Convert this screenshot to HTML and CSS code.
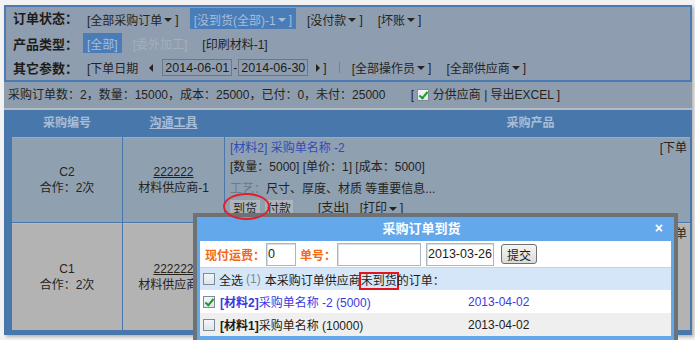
FILE: index.html
```html
<!DOCTYPE html>
<html lang="zh-CN">
  <head>
    <meta charset="UTF-8" />
    <title>采购订单</title>
    <link rel="stylesheet" href="styles.css">
  </head>
  <body>
    <div class="page">
      <div class="filter">
        <div class="frow">
          <span class="flabel">订单状态：</span>
          <a class="opt">[全部采购订单<i class="caret"></i>]</a>
          <a class="opt on">[没到货(全部)-1<i class="caret"></i>]</a>
          <a class="opt">[没付款<i class="caret"></i>]</a>
          <a class="opt">[坏账<i class="caret"></i>]</a>
        </div>
        <div class="frow">
          <span class="flabel">产品类型：</span>
          <a class="opt on">[全部]</a>
          <a class="opt off">[委外加工]</a>
          <a class="opt">[印刷材料-1]</a>
        </div>
        <div class="frow">
          <span class="flabel">其它参数：</span>
          <span class="opt">[下单日期</span>
          <i class="tri-l"></i>
          <input class="date" value="2014-06-01"><span class="dash">-</span><input class="date" value="2014-06-30">
          <i class="tri-r"></i><span>]</span>
          <span class="sep"></span>
          <a class="opt">[全部操作员<i class="caret"></i>]</a>
          <a class="opt">[全部供应商<i class="caret"></i>]</a>
        </div>
      </div>

      <div class="summary">
        <span>采购订单数：2，数量：15000，成本：25000，已付：0，未付：25000</span>
        <span class="tools">[ <i class="chk on"></i> 分供应商 | 导出EXCEL ]</span>
      </div>

      <div class="grid">
        <div class="th">采购编号</div>
        <div class="th"><u>沟通工具</u></div>
        <div class="th th-prod">采购产品</div>

        <div class="td center">
          <div>C2</div>
          <div>合作：2次</div>
        </div>
        <div class="td center">
          <div><u>222222</u></div>
          <div>材料供应商-1</div>
        </div>
        <div class="td prod">
          <span class="due">[下单</span>
          <div class="pname">[材料2] 采购单名称 -2</div>
          <div>[数量：5000] [单价：1] [成本：5000]</div>
          <div class="craft"><span class="muted">工艺：</span>尺寸、厚度、材质 等重要信息...</div>
          <div class="acts">
            <a class="btn">到货</a>
            <a class="btn">付款</a>
            <a class="act">[支出]</a>
            <a class="act">[打印<i class="caret"></i>]</a>
          </div>
        </div>

        <div class="td center gray">
          <div>C1</div>
          <div>合作：2次</div>
        </div>
        <div class="td center gray">
          <div><u>222222</u></div>
          <div>材料供应商-1</div>
        </div>
        <div class="td prod gray">
          <span class="due">[下单</span>
        </div>
      </div>

      <div class="dialog">
        <div class="dlg-title">采购订单到货<span class="dlg-close">×</span></div>
        <div class="dlg-body">
          <div class="dlg-form">
            <span class="dlg-label">现付运费：</span>
            <input class="dlg-input w-fee" value="0">
            <span class="dlg-label">单号：</span>
            <input class="dlg-input w-no" value="">
            <input class="dlg-input w-date" value="2013-03-26">
            <button class="dlg-btn">提交</button>
          </div>
          <div class="dlg-all">
            <i class="chk"></i>
            <span class="all-txt">全选</span>
            <span class="count">(1)</span>
            <span>本采购订单供应商<span class="flag">未到货</span>的订单：</span>
          </div>
          <div class="dlg-item picked">
            <i class="chk on"></i>
            <span class="iname"><b>[材料2]</b>采购单名称 -2 (5000)</span>
            <span>2013-04-02</span>
          </div>
          <div class="dlg-item alt">
            <i class="chk"></i>
            <span class="iname"><b>[材料1]</b>采购单名称 (10000)</span>
            <span>2013-04-02</span>
          </div>
        </div>
      </div>

      <span class="mark"></span>
    </div>
  </body>
</html>
```

FILE: styles.css
```css
* {
  box-sizing: border-box;
}
body {
  margin: 0;
  height: 340px;
  overflow: hidden;
  background: #f2f2f2;
  font: 12px "Liberation Sans", "Noto Sans CJK SC", sans-serif;
  color: #26231d;
}
a {
  color: inherit;
  text-decoration: none;
}
.page {
  position: relative;
  margin: 5px 3px 0 4px;
  box-shadow: 2px 2px 3px rgba(0, 0, 0, 0.25);
}

/* filter panel */
.filter {
  background: #8e9eb0;
  border: 2px solid #4b7bb3;
  padding: 0 0 0 7px;
}
.frow {
  display: flex;
  align-items: center;
  height: 24px;
  white-space: nowrap;
}
.frow:first-child {
  align-items: flex-start;
  padding-top: 1px;
}
.frow:last-child {
  height: 25px;
}
.flabel {
  width: 70px;
  font-size: 13px;
  font-weight: bold;
  color: #1e1c18;
}
.frow:first-child .flabel {
  line-height: 22px;
}
.opt {
  display: inline-flex;
  align-items: center;
  height: 20px;
  padding: 0 4px;
  margin-right: 7px;
}
.frow:first-child .opt {
  height: 21px;
  padding-top: 2px;
}
.opt.on {
  background: #4a7cb7;
  color: #a6bedc;
}
.opt.off {
  color: #a5aeba;
}
.caret {
  display: inline-block;
  width: 0;
  height: 0;
  margin: 1px 3px 0 2px;
  vertical-align: middle;
  border-left: 4px solid transparent;
  border-right: 4px solid transparent;
  border-top: 4px solid currentColor;
}
.tri-l,
.tri-r {
  display: inline-block;
  width: 0;
  height: 0;
  border-top: 4px solid transparent;
  border-bottom: 4px solid transparent;
}
.tri-l {
  border-right: 4px solid #26231d;
  margin-right: 9px;
}
.tri-r {
  border-left: 4px solid #26231d;
  margin: 0 3px 0 8px;
}
.date {
  width: 70px;
  height: 17px;
  padding: 0 2px;
  border: 1px solid #6b7886;
  background: #8e9eb0;
  font: 12.5px "Liberation Sans", sans-serif;
  color: #1e1c18;
}
.dash {
  width: 6px;
  text-align: center;
}
.sep {
  width: 1px;
  height: 11px;
  margin: 0 8px 0 12px;
  background: #5a88c0;
}

/* summary bar */
.summary {
  height: 28px;
  line-height: 26px;
  padding-left: 4px;
  background: #8d9dae;
  border-bottom: 2px solid #b6bbc1;
  white-space: nowrap;
}
.tools {
  margin-left: 22px;
}
.chk {
  display: inline-block;
  width: 12px;
  height: 12px;
  vertical-align: -2px;
  border: 1px solid #7e8c9a;
  background: linear-gradient(#f4f6f8, #dfe5eb);
  position: relative;
}
.chk.on::after {
  content: "";
  position: absolute;
  left: 3px;
  top: 0;
  width: 3px;
  height: 7px;
  border-right: 2px solid #1e9a2a;
  border-bottom: 2px solid #1e9a2a;
  transform: rotate(40deg);
}

/* orders table */
.grid {
  display: grid;
  grid-template-columns: 110px 101px 1fr;
  grid-template-rows: 26px 85px 107px;
  gap: 1px;
  padding: 0 2px 5px 8px;
  background: #4878ab;
}
.th {
  line-height: 26px;
  text-align: center;
  font-weight: bold;
  color: #a9bdd6;
}
.th-prod {
  padding-left: 146px;
}
.td {
  background: #8fa0b1;
  border-top: 1px solid #9cacbc;
}
.td.gray {
  background: #b3b3b3;
  border-top-color: #bdbdbd;
}
.center {
  display: flex;
  flex-direction: column;
  justify-content: center;
  align-items: center;
  line-height: 16px;
}
.prod {
  padding: 1px 3px 0 5px;
  line-height: 19px;
  white-space: nowrap;
  overflow: hidden;
}
.due {
  float: right;
}
.pname {
  color: #2f4bb9;
}
.craft {
  margin-top: 3px;
}
.muted {
  color: #6b7b8c;
}
.acts {
  display: flex;
  align-items: center;
  height: 19px;
}
.btn {
  height: 18px;
  line-height: 18px;
  padding: 0 3px;
  margin-right: 5px;
  background: #aeb4ba;
}
.btn + .btn {
  padding: 0 2px;
}
.act {
  display: inline-flex;
  align-items: center;
  margin-left: 20px;
}
.act + .act {
  margin-left: 11px;
}

/* arrival dialog */
.dialog {
  position: absolute;
  left: 189px;
  top: 208px;
  width: 485px;
  height: 140px;
  border: 4px solid #6f7274;
  padding: 0 3px 3px;
  background: #64a8ec;
  z-index: 2;
}
.dlg-title {
  position: relative;
  height: 24px;
  line-height: 24px;
  padding-right: 28px;
  text-align: center;
  font-size: 13px;
  font-weight: bold;
  color: #fff;
}
.dlg-close {
  position: absolute;
  right: 8px;
  top: -1px;
  font-size: 14px;
}
.dlg-body {
  background: #fff;
  color: #1e1c18;
}
.dlg-form {
  display: flex;
  align-items: center;
  height: 26px;
  padding-left: 5px;
}
.dlg-label {
  font-weight: bold;
  color: #f26a16;
}
.dlg-input {
  height: 23px;
  padding: 0 1px;
  border: 1px solid #a9b6c3;
  box-shadow: inset 1px 1px 1px #d8dde2;
  font: 12.5px "Liberation Sans", sans-serif;
  color: #1e1c18;
}
.w-fee {
  width: 30px;
  margin: 0 4px 0 1px;
}
.w-no {
  width: 84px;
  margin: 0 5px 0 1px;
}
.w-date {
  width: 68px;
  margin-right: 7px;
}
.dlg-btn {
  width: 36px;
  height: 20px;
  padding: 0;
  border: 1px solid #707070;
  border-radius: 3px;
  background: linear-gradient(#f6f6f6, #dadada);
  font: 12px "Liberation Sans", "Noto Sans CJK SC", sans-serif;
  color: #1e1c18;
}
.dlg-all {
  display: flex;
  align-items: center;
  height: 23px;
  padding-left: 3px;
  border-top: 1px solid #c2d4e6;
  background: #d4e6f8;
  white-space: nowrap;
}
.all-txt {
  margin: 0 3px 0 4px;
}
.count {
  margin-right: 4px;
  color: #808890;
}
.flag {
  display: inline-block;
  line-height: 14px;
  outline: 2px solid #e3141e;
}
.dlg-item {
  display: flex;
  align-items: center;
  height: 23px;
  padding-left: 3px;
  white-space: nowrap;
}
.dlg-item .chk {
  margin-right: 5px;
}
.iname {
  width: 248px;
}
.picked {
  color: #3a3ae0;
}
.alt {
  background: #efefef;
}

/* red annotation ring */
.mark {
  position: absolute;
  left: 219px;
  top: 188px;
  width: 47px;
  height: 27px;
  border: 2px solid #e0202a;
  border-radius: 50%;
  z-index: 3;
}
```
